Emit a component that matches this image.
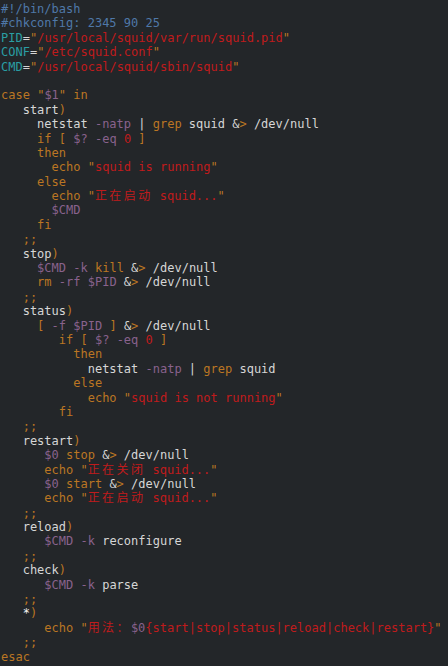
import React from "react";

const C = {
  o: "text-[#bb7623]",
  r: "text-[#c01b1c]",
  p: "text-[#89628d]",
  w: "text-[#d6d6d6]",
  b: "text-[#4f78a8]",
  t: "text-[#2a9ea3]",
  W: "text-[#f2f2f2]",
};

const L = [
  [["b", "#!/bin/bash"]],
  [["b", "#chkconfig: 2345 90 25"]],
  [["t", "PID"], ["w", "="], ["o", '"'], ["r", "/usr/local/squid/var/run/squid.pid"], ["o", '"']],
  [["t", "CONF"], ["w", "="], ["o", '"'], ["r", "/etc/squid.conf"], ["o", '"']],
  [["t", "CMD"], ["w", "="], ["o", '"'], ["r", "/usr/local/squid/sbin/squid"], ["o", '"']],
  [],
  [["o", "case"], ["w", " "], ["o", '"'], ["p", "$1"], ["o", '"'], ["w", " "], ["o", "in"]],
  [["w", "   start"], ["o", ")"]],
  [["w", "     netstat "], ["p", "-natp"], ["w", " | "], ["o", "grep"], ["w", " squid &"], ["o", ">"], ["w", " /dev/null"]],
  [["o", "     if ["], ["w", " "], ["p", "$?"], ["w", " "], ["p", "-eq"], ["w", " "], ["r", "0"], ["w", " "], ["o", "]"]],
  [["o", "     then"]],
  [["o", "       echo"], ["w", " "], ["o", '"'], ["r", "squid is running"], ["o", '"']],
  [["o", "     else"]],
  [["o", "       echo"], ["w", " "], ["o", '"'], ["r", "正在启动 squid..."], ["o", '"']],
  [["p", "       $CMD"]],
  [["o", "     fi"]],
  [["o", "   ;;"]],
  [["w", "   stop"], ["o", ")"]],
  [["p", "     $CMD"], ["w", " "], ["p", "-k"], ["w", " "], ["o", "kill"], ["w", " &"], ["o", ">"], ["w", " /dev/null"]],
  [["o", "     rm"], ["w", " "], ["p", "-rf"], ["w", " "], ["p", "$PID"], ["w", " &"], ["o", ">"], ["w", " /dev/null"]],
  [["o", "   ;;"]],
  [["w", "   status"], ["o", ")"]],
  [["o", "     ["], ["w", " "], ["p", "-f"], ["w", " "], ["p", "$PID"], ["w", " "], ["o", "]"], ["w", " &"], ["o", ">"], ["w", " /dev/null"]],
  [["o", "        if ["], ["w", " "], ["p", "$?"], ["w", " "], ["p", "-eq"], ["w", " "], ["r", "0"], ["w", " "], ["o", "]"]],
  [["o", "          then"]],
  [["w", "            netstat "], ["p", "-natp"], ["w", " | "], ["o", "grep"], ["w", " squid"]],
  [["o", "          else"]],
  [["o", "            echo"], ["w", " "], ["o", '"'], ["r", "squid is not running"], ["o", '"']],
  [["o", "        fi"]],
  [["o", "   ;;"]],
  [["w", "   restart"], ["o", ")"]],
  [["p", "      $0"], ["w", " "], ["o", "stop"], ["w", " &"], ["o", ">"], ["w", " /dev/null"]],
  [["o", "      echo"], ["w", " "], ["o", '"'], ["r", "正在关闭 squid..."], ["o", '"']],
  [["p", "      $0"], ["w", " "], ["o", "start"], ["w", " &"], ["o", ">"], ["w", " /dev/null"]],
  [["o", "      echo"], ["w", " "], ["o", '"'], ["r", "正在启动 squid..."], ["o", '"']],
  [["o", "   ;;"]],
  [["w", "   reload"], ["o", ")"]],
  [["p", "      $CMD"], ["w", " "], ["p", "-k"], ["w", " reconfigure"]],
  [["o", "   ;;"]],
  [["w", "   check"], ["o", ")"]],
  [["p", "      $CMD"], ["w", " "], ["p", "-k"], ["w", " parse"]],
  [["o", "   ;;"]],
  [["W", "   *"], ["o", ")"]],
  [["o", "      echo"], ["w", " "], ["o", '"'], ["r", "用法："], ["p", "$0"], ["r", "{start|stop|status|reload|check|restart}"], ["o", '"']],
  [["o", "   ;;"]],
  [["o", "esac"]],
];

const isCJK = (ch) => /[\u3000-\u9fff\uff00-\uffef]/.test(ch);

function Seg({ color, text }) {
  const parts = [];
  let buf = "";
  let k = 0;
  for (const ch of text) {
    if (isCJK(ch)) {
      if (buf) {
        parts.push(<span key={k++}>{buf}</span>);
        buf = "";
      }
      parts.push(
        <span key={k++} className="inline-block w-[14.4px] text-[12px] leading-[14.4px]">
          {ch}
        </span>
      );
    } else {
      buf += ch;
    }
  }
  if (buf) parts.push(<span key={k++}>{buf}</span>);
  return <span className={C[color]}>{parts}</span>;
}

export default function App() {
  return (
    <div className="w-[448px] h-[666px] overflow-hidden bg-[#232629] pt-[2px] pl-[1px] font-['DejaVu_Sans_Mono','Noto_Sans_CJK_SC',monospace] text-[12px] leading-[14.4px]">
      {L.map((line, i) => (
        <div key={i} className="h-[14.4px] whitespace-pre">
          {line.map(([c, t], j) => (
            <Seg key={j} color={c} text={t} />
          ))}
        </div>
      ))}
    </div>
  );
}
